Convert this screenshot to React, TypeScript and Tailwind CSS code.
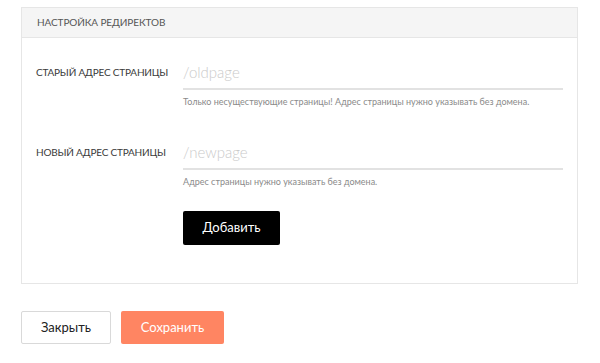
const fields = [
  {
    label: "Старый адрес страницы",
    placeholder: "/oldpage",
    hint: "Только несуществующие страницы! Адрес страницы нужно указывать без домена.",
  },
  {
    label: "Новый адрес страницы",
    placeholder: "/newpage",
    hint: "Адрес страницы нужно указывать без домена.",
  },
];

export default function App() {
  return (
    <div className="min-h-screen bg-white px-[21px] pt-[7px] font-['Lato','Noto_Sans',sans-serif] text-[#222]">
      <section className="w-[557px] border border-[#e6e6e6]">
        <header className="flex h-[30px] items-center border-b border-[#e6e6e6] bg-[#f5f5f5] px-[15px] text-[10px] uppercase tracking-[-0.01em] text-[#555]">
          Настройка редиректов
        </header>

        <div className="flex flex-col gap-[27px] px-[14px] pt-[18px] pb-[38px]">
          {fields.map((f) => (
            <div key={f.label} className="flex items-start">
              <label className="flex h-[32px] w-[147px] shrink-0 items-center whitespace-nowrap text-[10px] uppercase tracking-[-0.02em] text-[#3a3a3a]">
                {f.label}
              </label>
              <div className="flex-1">
                <input
                  placeholder={f.placeholder}
                  className="h-[34px] w-full border-b-2 border-[#e2e2e2] bg-transparent text-[15px] font-light outline-none placeholder:text-[#cacaca]"
                />
                <p className="mt-[5px] whitespace-nowrap text-[9px] leading-[14px] text-[#8a8a8a]">{f.hint}</p>
              </div>
            </div>
          ))}

          <div className="-mt-[5px] pl-[147px]">
            <button className="h-[34px] w-[97px] rounded-[2px] bg-black text-[13px] text-white">
              Добавить
            </button>
          </div>
        </div>
      </section>

      <div className="mt-[27px] flex gap-[10px]">
        <button className="h-[33px] w-[90px] rounded-[2px] border border-[#d9d9d9] bg-white text-[13px] text-[#222]">
          Закрыть
        </button>
        <button className="h-[33px] w-[103px] rounded-[2px] bg-[#ff8562] text-[13px] text-white">
          Сохранить
        </button>
      </div>
    </div>
  );
}
